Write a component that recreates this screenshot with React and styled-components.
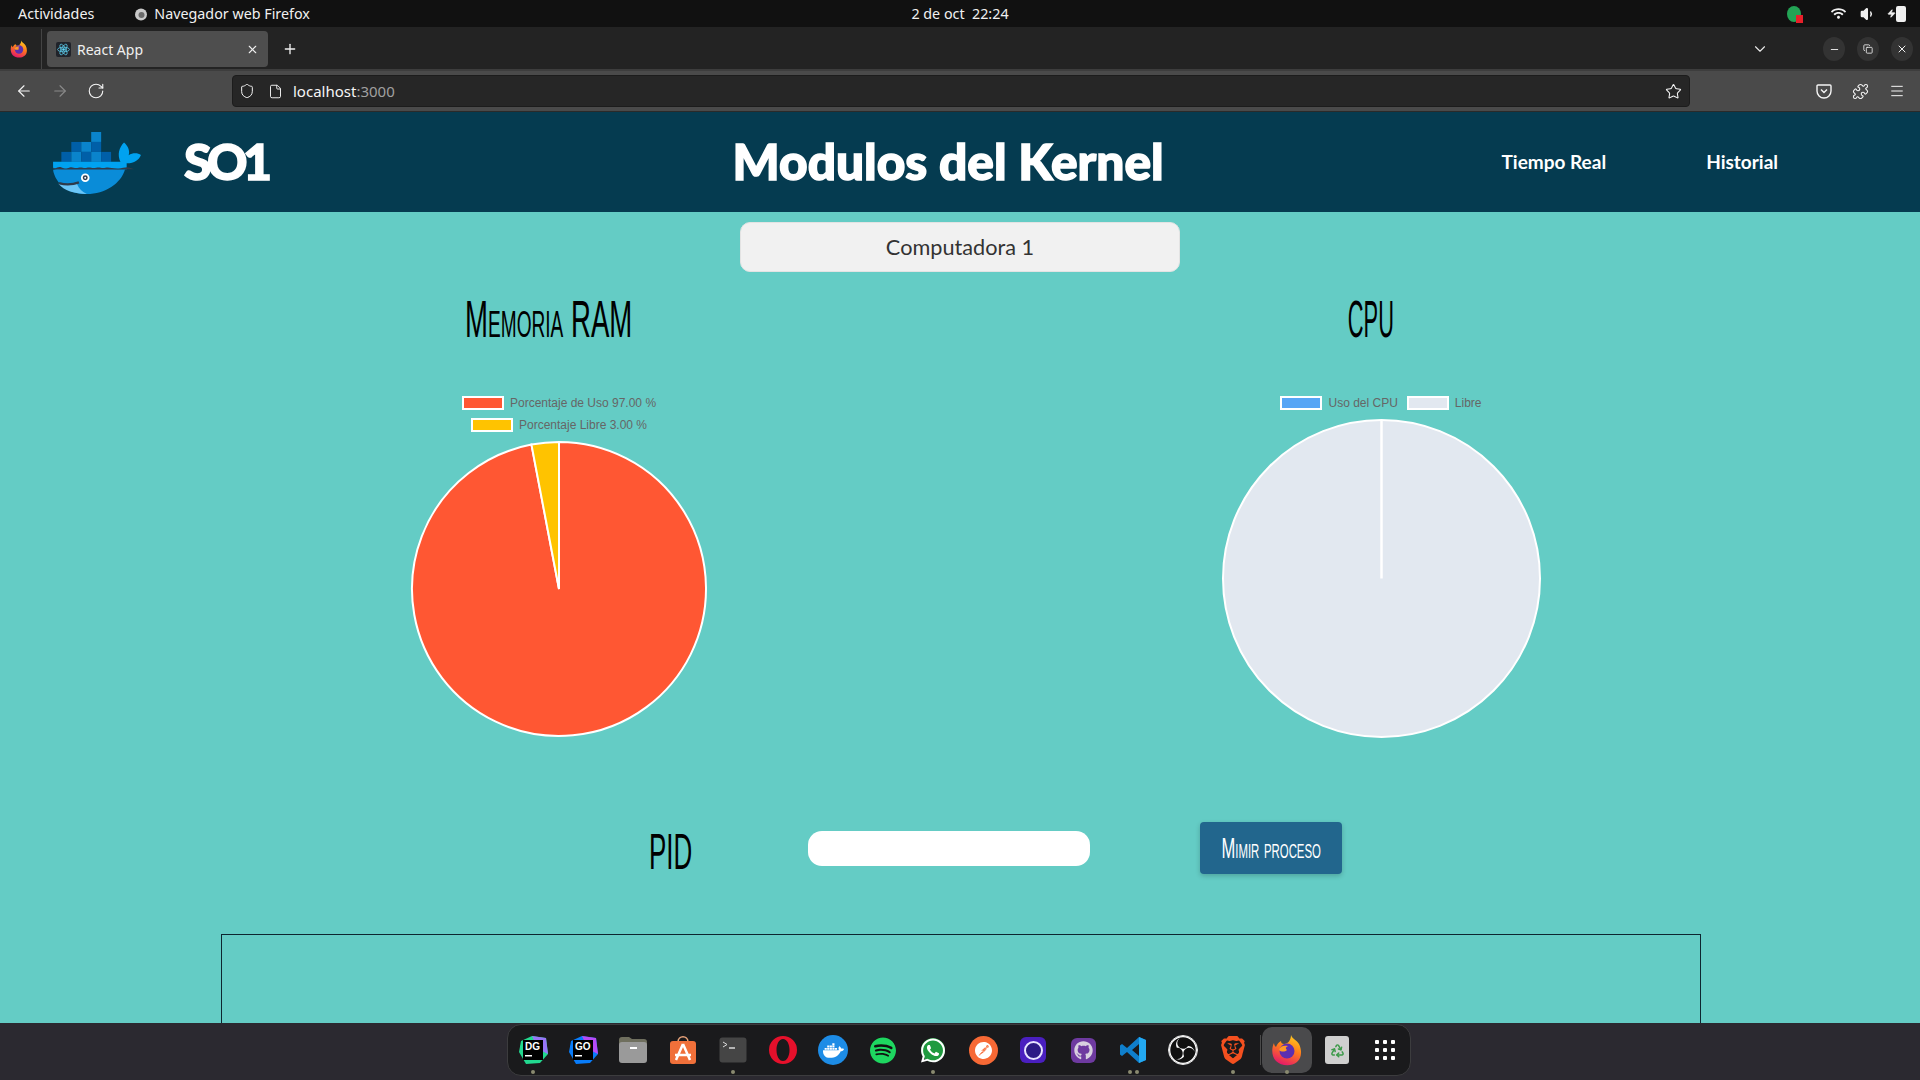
import React from "react";
import styled, { createGlobalStyle } from "styled-components";
import {
  ArrowLeft,
  ArrowRight,
  RotateCw,
  Shield,
  File,
  Star,
  Menu,
  Puzzle,
  ChevronDown,
  X,
  Plus,
  Minus,
  Copy,
  Recycle,
  Volume1,
  Zap,
} from "lucide-react";
import { FaDocker, FaSpotify, FaWhatsapp, FaGithub, FaWifi } from "react-icons/fa";
import { SiPostman, SiObsstudio, SiBrave } from "react-icons/si";

const GlobalStyle = createGlobalStyle`
  html, body { margin: 0; padding: 0; height: 100%; overflow: hidden; }
  * { box-sizing: border-box; }
`;

const hand = `"Liberation Sans", sans-serif`;
const ui = `"Noto Sans", "Open Sans", sans-serif`;

const Screen = styled.div`
  width: 1920px;
  height: 1080px;
  display: flex;
  flex-direction: column;
  overflow: hidden;
  background: #64ccc5;
`;

/* gnome top bar */
const TopBar = styled.div`
  height: 27px;
  flex: none;
  background: #111111;
  color: #f0f0f0;
  font: 400 14.3px ${ui};
  display: flex;
  align-items: center;
  padding-left: 18px;
  position: relative;
`;

const AppName = styled.div`
  display: flex;
  align-items: center;
  gap: 6px;
  margin-left: 40px;
`;

const Clock = styled.div`
  position: absolute;
  left: 0;
  right: 0;
  text-align: center;
  pointer-events: none;
  white-space: pre;
`;

const Tray = styled.div`
  margin-left: auto;
  display: flex;
  align-items: center;
  gap: 14px;
  padding-right: 14px;
`;

const TrayBadge = styled.div`
  width: 14px;
  height: 16px;
  border-radius: 50%;
  background: #23a455;
  position: relative;
  margin-right: 16px;
  &::after {
    content: "";
    position: absolute;
    right: -2px;
    bottom: -1px;
    width: 7px;
    height: 8px;
    background: #e8202a;
  }
`;

const BatteryGroup = styled.div`
  display: flex;
  align-items: center;
  margin-left: -3px;
`;

const Battery = styled.div`
  width: 10px;
  height: 16px;
  background: #f0f0f0;
  border-radius: 2px;
  border: 2px solid #f0f0f0;
`;

/* firefox tab strip */
const TabStrip = styled.div`
  height: 44px;
  flex: none;
  background: #232323;
  border-bottom: 2px solid #3d3d3d;
  padding-top: 2px;
  display: flex;
  align-items: center;
  color: #f0f0f0;
`;

const FirefoxSlot = styled.div`
  width: 42px;
  height: 40px;
  display: flex;
  align-items: center;
  justify-content: center;
  border-right: 1px solid #444;
  padding-right: 3px;
`;

const Tab = styled.div`
  width: 221px;
  height: 36px;
  margin-left: 5px;
  background: #4e4e4e;
  border-radius: 4px;
  display: flex;
  align-items: center;
  padding: 0 9px 0 9px;
  gap: 6px;
  font: 400 14px ${ui};
`;

const Favicon = styled.div`
  width: 15px;
  height: 15px;
  background: #20232a;
  display: flex;
  align-items: center;
  justify-content: center;
  border-radius: 2px;
`;

const TabTitle = styled.span`
  flex: 1;
`;

const NewTab = styled.div`
  margin-left: 14px;
  display: flex;
`;

const StripRight = styled.div`
  margin-left: auto;
  display: flex;
  align-items: center;
  padding-right: 7px;
`;

const AllTabs = styled.div`
  display: flex;
  margin-right: 42px;
  color: #e8e8e8;
`;

const WindowButton = styled.div`
  width: 22px;
  height: 24px;
  margin-left: 12px;
  border-radius: 50%;
  background: #333333;
  display: flex;
  align-items: center;
  justify-content: center;
`;

/* firefox nav bar */
const NavBar = styled.div`
  height: 41px;
  flex: none;
  background: #4a4a4a;
  border-bottom: 1px solid #2a2a2a;
  display: flex;
  align-items: center;
  padding-left: 15px;
  color: #f5f5f5;
`;

const NavButtons = styled.div`
  width: 217px;
  display: flex;
  align-items: center;
  gap: 18px;
`;

const UrlBar = styled.div`
  width: 1458px;
  height: 32px;
  background: #262626;
  border: 1px solid #1c1c1c;
  border-radius: 4px;
  display: flex;
  align-items: center;
  padding: 0 7px 0 6px;
  font: 400 15px ${ui};
`;

const UrlHost = styled.span`
  margin-left: 10px;
`;

const UrlPort = styled.span`
  color: #a0a0a0;
`;

const UrlStar = styled.div`
  margin-left: auto;
  display: flex;
`;

const NavRight = styled.div`
  margin-left: 126px;
  display: flex;
  align-items: center;
  gap: 20px;
`;

/* the react page */
const Header = styled.header`
  height: 100px;
  flex: none;
  background: #053b50;
  display: flex;
  align-items: center;
  color: #ffffff;
  padding-left: 53px;
  position: relative;
`;

const LogoSvg = styled.svg`
  margin-top: 2px;
`;

const Brand = styled.div`
  font: 900 50px Lato, sans-serif;
  -webkit-text-stroke: 1.5px #fff;
  letter-spacing: -4.5px;
  margin: 0 0 2px 43px;
`;

const PageTitle = styled.h1`
  font: 900 49.6px Lato, sans-serif;
  -webkit-text-stroke: 1.5px #fff;
  margin: 0 0 2px 465px;
`;

const NavLinks = styled.nav`
  margin: 0 0 2px auto;
  padding-right: 142px;
  display: flex;
  gap: 100px;
  font: 700 19px Lato, sans-serif;
`;

const Body = styled.main`
  flex: 1;
  min-height: 0;
  overflow: hidden;
  display: flex;
  flex-direction: column;
  align-items: center;
`;

const Selector = styled.div`
  width: 440px;
  height: 50px;
  flex: none;
  margin-top: 10px;
  background: #f1f1f1;
  border: 1px solid #e3e3e3;
  border-radius: 10px;
  display: flex;
  align-items: center;
  justify-content: center;
  color: #333;
  font: 400 21.7px Lato, sans-serif;
`;

const Charts = styled.section`
  width: 100%;
  flex: none;
  padding-left: 148px;
  display: grid;
  grid-template-columns: 822px 822px;
`;

const ChartColumn = styled.div`
  display: flex;
  flex-direction: column;
  align-items: center;
`;

const ChartTitle = styled.h2`
  height: 124px;
  margin: 0 21px 0 0;
  padding-top: 19px;
  color: #000;
  font: 400 52px/56px ${hand};
  font-variant: small-caps;
  white-space: nowrap;
  transform: scaleX(${(p) => p.$squeeze});
`;

const Legend = styled.div`
  display: flex;
  justify-content: center;
  gap: 9px;
  height: 22px;
  flex: none;
`;

const LegendItem = styled.div`
  display: flex;
  gap: 6px;
  font: 400 12px/14px "Liberation Sans", sans-serif;
  color: #666666;
`;

const Swatch = styled.div`
  width: 42px;
  height: 14px;
  border: 2px solid #ffffff;
  background: ${(p) => p.$color};
`;

const PieBox = styled.svg`
  display: block;
  flex: none;
`;

const PidRow = styled.section`
  display: flex;
  align-items: center;
  flex: none;
  margin-top: 83px;
  height: 52px;
  padding-left: 649px;
  width: 100%;
`;

const PidLabel = styled.label`
  width: 159px;
  flex: none;
  color: #000;
  font: 400 50px/52px ${hand};
  padding-top: 8px;
  transform: scaleX(0.52);
  transform-origin: left center;
`;

const PidInput = styled.input`
  width: 282px;
  height: 35px;
  border: none;
  border-radius: 14px;
  background: #ffffff;
`;

const SleepButton = styled.button`
  width: 142px;
  height: 52px;
  margin-left: 110px;
  border: none;
  border-radius: 4px;
  background: #22668d;
  color: #ffffff;
  display: flex;
  align-items: center;
  justify-content: center;
  padding: 0;
  box-shadow: 0 2px 5px rgba(0, 0, 0, 0.2);
`;

const SleepLabel = styled.span`
  font: 400 29px ${hand};
  font-variant: small-caps;
  white-space: nowrap;
  transform: scaleX(0.57);
`;

const ProcessTable = styled.div`
  width: 1480px;
  height: 200px;
  flex: none;
  margin-top: 60px;
  margin-left: 2px;
  border: 1px solid #0d2630;
`;

/* ubuntu dock */
const DockBar = styled.div`
  height: 57px;
  flex: none;
  background: #2b2930;
  display: flex;
  justify-content: center;
  padding-top: 1px;
`;

const Dock = styled.div`
  width: 904px;
  height: 52px;
  margin-left: -2px;
  background: #1a1a1c;
  border: 1px solid #3c3c3e;
  border-radius: 14px;
  display: flex;
  align-items: center;
`;

const DockSlot = styled.div`
  width: 50px;
  height: 46px;
  flex: none;
  display: flex;
  align-items: center;
  justify-content: center;
  position: relative;
  border-radius: 10px;
  background: ${(p) => (p.$active ? "#4a4a4c" : "transparent")};
  &::after {
    content: "";
    display: ${(p) => (p.$dots ? "block" : "none")};
    position: absolute;
    left: 50%;
    bottom: -1px;
    width: 4px;
    height: 4px;
    margin-left: ${(p) => (p.$dots > 1 ? -5 : -2)}px;
    border-radius: 50%;
    background: #8a8a70;
    box-shadow: ${(p) => (p.$dots > 1 ? "7px 0 0 #8a8a70" : "none")};
  }
`;

const AppGrid = styled(DockSlot)`
  margin-left: -2px;
`;

const DockDivider = styled.div`
  width: 1px;
  height: 30px;
  margin: 0 1px 0 2px;
  background: #4a4a4a;
  flex: none;
`;

const RoundIcon = styled.div`
  width: ${(p) => p.$size || 30}px;
  height: ${(p) => p.$tall || p.$size || 30}px;
  border-radius: ${(p) => p.$radius || "50%"};
  background: ${(p) => p.$bg};
  color: ${(p) => p.$fg || "#fff"};
  border: ${(p) => p.$border || "none"};
  display: flex;
  align-items: center;
  justify-content: center;
`;

const JetLabel = styled.text`
  font: 700 10px "Liberation Sans", sans-serif;
  fill: #fff;
`;

const DotGrid = styled.div`
  display: grid;
  grid-template-columns: repeat(3, 4px);
  gap: 4px;
  span {
    width: 4px;
    height: 4px;
    border-radius: 1px;
    background: #fff;
  }
`;

function DockerLogo() {
  const cells = [
    [183, 50, "#0a84cc"],
    [123, 80, "#005fa8"],
    [153, 80, "#0a84cc"],
    [183, 80, "#005fa8"],
    [93, 110, "#005fa8"],
    [123, 110, "#0a84cc"],
    [153, 110, "#005fa8"],
    [183, 110, "#0a84cc"],
    [213, 110, "#005fa8"],
  ];
  return (
    <LogoSvg width="88" height="62" viewBox="68 50 265 187">
      {cells.map(([x, y, fill]) => (
        <rect key={x + "-" + y} x={x} y={y} width="30" height="30" fill={fill} />
      ))}
      <path d="M272 142C260 118 268 96 282 82c14 12 18 28 14 38 12-8 28-7 37-1-6 16-22 26-44 25z" fill="#00a2f0" />
      <path d="M68 140h222v22H68z" fill="#00a2f0" />
      <path d="M68 165c10-2 20-6 40-4s40 0 60 0 60 0 117 2c-12 42-60 74-115 74-58 0-94-32-102-72z" fill="#0a8cd8" />
      <path d="M84 206c16 20 50 31 86 31-14-6-24-16-30-30-20 4-38 4-56-1z" fill="#6cc6f7" />
      <path d="M68 158c12 4 14-6 26-1s14 3 24 0 14 4 26 1 16 3 26 0 16 3 28 0 16 3 28 0 20 3 40 2c12-1 26-7 34-2l13 4H285c-70 2-150 1-217 0z" fill="#2f3b4b" />
      <path d="M86 204c20 6 40 5 60-2" stroke="#2f3b4b" strokeWidth="7" fill="none" />
      <circle cx="165" cy="188" r="13" fill="#fff" />
      <circle cx="165" cy="188" r="7.5" fill="#2f3b4b" />
      <circle cx="165" cy="188" r="3" fill="#fff" />
    </LogoSvg>
  );
}

function FirefoxIcon({ size }) {
  return (
    <svg width={size} height={size} viewBox="0 0 32 32">
      <defs>
        <linearGradient id="ffBody" x1="0.7" y1="0" x2="0.3" y2="1">
          <stop offset="0" stopColor="#ffcb20" />
          <stop offset="0.45" stopColor="#ff7a1c" />
          <stop offset="1" stopColor="#e3136e" />
        </linearGradient>
      </defs>
      <path d="M20 1c1 4 6 5 8 9 3 6 3 14-2 18-6 5-16 4-21-1C1 23 0 15 3 9c0 2 1 3 2 4 1-3 3-5 5-6 0 2 1 3 3 3 4 0 7-4 7-9z" fill="url(#ffBody)" />
      <circle cx="16" cy="17" r="7.5" fill="#5c2fb0" />
      <path d="M8 16c2 2 6 2 8 0-2-2-1-3 1-4-4-1-8 0-9 4z" fill="#ff9a25" />
    </svg>
  );
}

function FirefoxIconGray() {
  return (
    <svg width="14" height="14" viewBox="0 0 14 14">
      <circle cx="7" cy="7.5" r="6" fill="#c9c9c9" />
      <circle cx="7.5" cy="8" r="3" fill="#6a6a6a" />
    </svg>
  );
}

function ReactFavicon() {
  return (
    <svg width="13" height="13" viewBox="-12 -12 24 24" fill="none" stroke="#61dafb" strokeWidth="1.3">
      <circle r="2" fill="#61dafb" />
      <ellipse rx="11" ry="4.2" />
      <ellipse rx="11" ry="4.2" transform="rotate(60)" />
      <ellipse rx="11" ry="4.2" transform="rotate(120)" />
    </svg>
  );
}

function PocketIcon() {
  return (
    <svg width="16" height="16" viewBox="0 0 16 16" fill="none" stroke="currentColor" strokeWidth="1.4">
      <path d="M2 2h12a1 1 0 0 1 1 1v5a7 7 0 0 1-14 0V3a1 1 0 0 1 1-1z" />
      <path d="M5 6.5l3 3 3-3" />
    </svg>
  );
}

function JetBrainsIcon({ label, colors }) {
  return (
    <svg width="30" height="30" viewBox="0 0 30 30">
      <polygon points="3,6 14,1 28,3 30,19 22,28 8,29 1,17" fill={colors[0]} />
      <polygon points="14,1 28,3 30,19 20,14" fill={colors[1]} />
      <rect x="5" y="5" width="20" height="20" fill="#000" />
      <JetLabel x="7" y="15">{label}</JetLabel>
      <rect x="7" y="20" width="7" height="1.5" fill="#fff" />
    </svg>
  );
}

function FilesIcon() {
  return (
    <svg width="30" height="28" viewBox="0 0 30 28">
      <path d="M1 4a3 3 0 0 1 3-3h7l3 2h12a3 3 0 0 1 3 3v6H1z" fill="#6f6f5e" />
      <rect x="1" y="6" width="28" height="21" rx="3" fill="#9a9a9a" />
      <rect x="12" y="11" width="7" height="2" fill="#fff" />
    </svg>
  );
}

function StoreIcon() {
  return (
    <svg width="28" height="30" viewBox="0 0 28 30">
      <path d="M9 7c0-7 10-7 10 0" fill="none" stroke="#e8a37a" strokeWidth="1.5" />
      <rect x="1" y="6" width="26" height="23" rx="3" fill="#f0703a" />
      <path d="M14 9l-7 16M14 9l7 16M6 20h16" stroke="#fff" strokeWidth="2.5" fill="none" />
    </svg>
  );
}

function TerminalIcon() {
  return (
    <svg width="28" height="26" viewBox="0 0 28 26">
      <rect x="0.5" y="0.5" width="27" height="25" rx="3" fill="#454545" />
      <path d="M4 5l4 2.5L4 10" stroke="#ddd" fill="none" />
      <path d="M10 11h6" stroke="#fff" strokeWidth="1.2" />
    </svg>
  );
}

function OperaIcon() {
  return (
    <svg width="30" height="30" viewBox="0 0 30 30">
      <path fillRule="evenodd" d="M15 1a14 14 0 1 1 0 28 14 14 0 0 1 0-28zm0 3c-4 0-6.5 5-6.5 11s2.5 11 6.5 11 6.5-5 6.5-11S19 4 15 4z" fill="#e6102b" />
    </svg>
  );
}

function VsCodeIcon() {
  return (
    <svg width="28" height="28" viewBox="0 0 28 28">
      <path d="M20 1l7 3v20l-7 3L8 16l-5 4-2-1.5V9.500L3 8l5 4zm0 7l-7 6 7 6z" fill="#0f7fcc" />
      <path d="M20 1l7 3v20l-7 3z" fill="#23a9f2" />
    </svg>
  );
}

function slicePath(cx, cy, r, from, to) {
  const angle = (f) => f * 2 * Math.PI - Math.PI / 2;
  const x1 = cx + r * Math.cos(angle(from));
  const y1 = cy + r * Math.sin(angle(from));
  const x2 = cx + r * Math.cos(angle(to));
  const y2 = cy + r * Math.sin(angle(to));
  const large = to - from > 0.5 ? 1 : 0;
  return `M${cx} ${cy}L${x1} ${y1}A${r} ${r} 0 ${large} 1 ${x2} ${y2}Z`;
}

function Pie({ radius, slices }) {
  const size = radius * 2 + 4;
  const c = size / 2;
  let acc = 0;
  return (
    <PieBox width={size} height={size}>
      {slices.map((s) => {
        const from = acc;
        acc += s.value;
        if (s.value >= 1) {
          return (
            <g key={s.color}>
              <circle cx={c} cy={c} r={radius} fill={s.color} stroke="#fff" strokeWidth="2" />
              <line x1={c} y1={c} x2={c} y2={c - radius} stroke="#fff" strokeWidth="2.5" />
            </g>
          );
        }
        return <path key={s.color} d={slicePath(c, c, radius, from, acc)} fill={s.color} stroke="#fff" strokeWidth="2" />;
      })}
    </PieBox>
  );
}

const dockApps = [
  { id: "dg", dots: 1, icon: <JetBrainsIcon label="DG" colors={["#22d88f", "#9775f8"]} /> },
  { id: "go", icon: <JetBrainsIcon label="GO" colors={["#087cfa", "#b74af7"]} /> },
  { id: "files", icon: <FilesIcon /> },
  { id: "store", icon: <StoreIcon /> },
  { id: "term", dots: 1, icon: <TerminalIcon /> },
  { id: "opera", icon: <OperaIcon /> },
  { id: "docker", icon: <RoundIcon $bg="#1d8ce6"><FaDocker size={21} /></RoundIcon> },
  { id: "spotify", icon: <RoundIcon $size={26} $bg="#111" $fg="#1ed760"><FaSpotify size={27} /></RoundIcon> },
  { id: "wa", dots: 1, icon: <RoundIcon $size={24} $bg="#1f9a3f"><FaWhatsapp size={29} /></RoundIcon> },
  { id: "postman", icon: <RoundIcon $size={29} $bg="#f76935"><SiPostman size={17} /></RoundIcon> },
  { id: "station", icon: <RoundIcon $radius="6px" $bg="#4a1fc0" $size={26}><RoundIcon $size={19} $bg="#2c1a86" $border="2px solid #e8e4ff" /></RoundIcon> },
  { id: "ghd", icon: <RoundIcon $radius="6px" $bg="#6e3aa0" $size={25}><FaGithub size={19} color="#d8d0e0" /></RoundIcon> },
  { id: "code", dots: 2, icon: <VsCodeIcon /> },
  { id: "obs", icon: <RoundIcon $bg="#111" $border="1px solid #eee"><SiObsstudio size={28} /></RoundIcon> },
  { id: "brave", dots: 1, icon: <SiBrave size={28} color="#f4501f" /> },
];

export default function App() {
  return (
    <Screen>
      <GlobalStyle />
      <TopBar>
        Actividades
        <AppName>
          <FirefoxIconGray />
          Navegador web Firefox
        </AppName>
        <Clock>{"2 de oct  22:24"}</Clock>
        <Tray>
          <TrayBadge />
          <FaWifi size={15} />
          <Volume1 size={16} fill="#f0f0f0" />
          <BatteryGroup>
            <Zap size={9} fill="#f0f0f0" />
            <Battery />
          </BatteryGroup>
        </Tray>
      </TopBar>
      <TabStrip>
        <FirefoxSlot>
          <FirefoxIcon size={18} />
        </FirefoxSlot>
        <Tab>
          <Favicon>
            <ReactFavicon />
          </Favicon>
          <TabTitle>React App</TabTitle>
          <X size={13} />
        </Tab>
        <NewTab>
          <Plus size={16} />
        </NewTab>
        <StripRight>
          <AllTabs>
            <ChevronDown size={18} strokeWidth={1.5} />
          </AllTabs>
          <WindowButton><Minus size={11} /></WindowButton>
          <WindowButton><Copy size={10} /></WindowButton>
          <WindowButton><X size={12} /></WindowButton>
        </StripRight>
      </TabStrip>
      <NavBar>
        <NavButtons>
          <ArrowLeft size={18} strokeWidth={1.5} />
          <ArrowRight size={18} strokeWidth={1.5} color="#8a8a8a" />
          <RotateCw size={18} strokeWidth={1.5} />
        </NavButtons>
        <UrlBar>
          <Shield size={16} strokeWidth={1.5} />
          <File size={15} strokeWidth={1.5} style={{ marginLeft: 13 }} />
          <UrlHost>
            localhost<UrlPort>:3000</UrlPort>
          </UrlHost>
          <UrlStar>
            <Star size={17} strokeWidth={1.5} />
          </UrlStar>
        </UrlBar>
        <NavRight>
          <PocketIcon />
          <Puzzle size={17} strokeWidth={1.5} />
          <Menu size={16} strokeWidth={1.5} />
        </NavRight>
      </NavBar>
      <Header>
        <DockerLogo />
        <Brand>SO1</Brand>
        <PageTitle>Modulos del Kernel</PageTitle>
        <NavLinks>
          <span>Tiempo Real</span>
          <span>Historial</span>
        </NavLinks>
      </Header>
      <Body>
        <Selector>Computadora 1</Selector>
        <Charts>
          <ChartColumn>
            <ChartTitle $squeeze={0.53}>Memoria RAM</ChartTitle>
            <Legend>
              <LegendItem>
                <Swatch $color="#ff5733" />
                Porcentaje de Uso 97.00 %
              </LegendItem>
            </Legend>
            <Legend>
              <LegendItem>
                <Swatch $color="#ffc300" />
                Porcentaje Libre 3.00 %
              </LegendItem>
            </Legend>
            <Pie
              radius={147}
              slices={[
                { value: 0.97, color: "#ff5733" },
                { value: 0.03, color: "#ffc300" },
              ]}
            />
          </ChartColumn>
          <ChartColumn>
            <ChartTitle $squeeze={0.42}>CPU</ChartTitle>
            <Legend>
              <LegendItem>
                <Swatch $color="#57a5f5" />
                Uso del CPU
              </LegendItem>
              <LegendItem>
                <Swatch $color="#e2e8f0" />
                Libre
              </LegendItem>
            </Legend>
            <Pie radius={158.5} slices={[{ value: 1, color: "#e2e8f0" }]} />
          </ChartColumn>
        </Charts>
        <PidRow>
          <PidLabel>PID</PidLabel>
          <PidInput />
          <SleepButton>
            <SleepLabel>Mimir proceso</SleepLabel>
          </SleepButton>
        </PidRow>
        <ProcessTable />
      </Body>
      <DockBar>
        <Dock>
          {dockApps.map((app) => (
            <DockSlot key={app.id} $dots={app.dots}>
              {app.icon}
            </DockSlot>
          ))}
          <DockDivider />
          <DockSlot $active $dots={1}>
            <FirefoxIcon size={32} />
          </DockSlot>
          <DockSlot>
            <RoundIcon $size={24} $tall={28} $radius="3px" $bg="#cfcfcf" $fg="#3d9a4a">
              <Recycle size={15} strokeWidth={2.4} />
            </RoundIcon>
          </DockSlot>
          <AppGrid>
            <DotGrid>
              {Array.from({ length: 9 }, (_, i) => (
                <span key={i} />
              ))}
            </DotGrid>
          </AppGrid>
        </Dock>
      </DockBar>
    </Screen>
  );
}
